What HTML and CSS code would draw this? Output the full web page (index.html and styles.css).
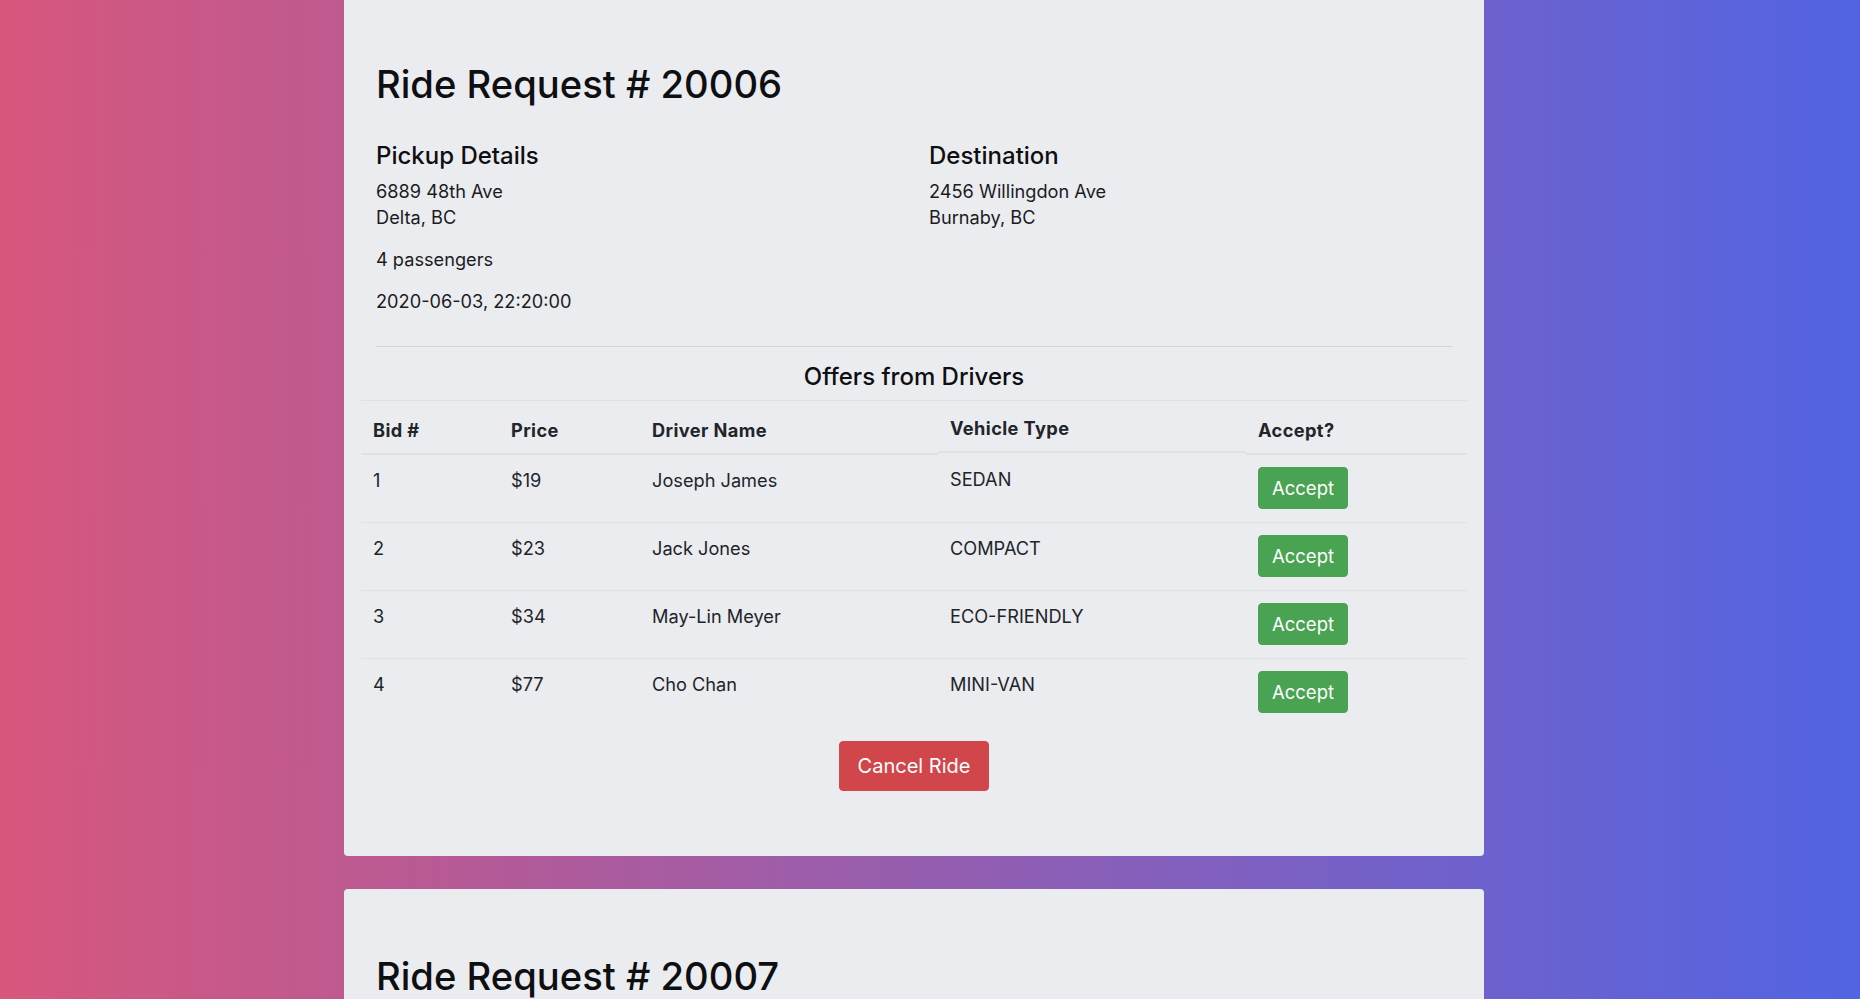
FILE: index.html
```html
<!DOCTYPE html>
<html lang="en">
<head>
<meta charset="utf-8">
<title>Ride Requests</title>
<link rel="stylesheet" href="styles.css">
</head>
<body>
<div class="page">
  <div class="container">
    <section class="card">
      <h1 class="title">Ride Request # 20006</h1>
      <div class="details">
        <div class="col">
          <h4 class="sub">Pickup Details</h4>
          <p class="txt">6889 48th Ave<br>Delta, BC</p>
          <p class="txt">4 passengers</p>
          <p class="txt">2020-06-03, 22:20:00</p>
        </div>
        <div class="col">
          <h4 class="sub">Destination</h4>
          <p class="txt">2456 Willingdon Ave<br>Burnaby, BC</p>
        </div>
      </div>
      <hr class="rule">
      <h4 class="offers">Offers from Drivers</h4>
      <table class="bids">
        <colgroup>
          <col class="c-bid"><col class="c-price"><col class="c-name"><col class="c-veh"><col class="c-acc">
        </colgroup>
        <thead>
          <tr>
            <th>Bid #</th>
            <th>Price</th>
            <th>Driver Name</th>
            <th class="th-veh"><div class="veh-inner">Vehicle Type</div></th>
            <th>Accept?</th>
          </tr>
        </thead>
        <tbody>
          <tr><td>1</td><td>$19</td><td>Joseph James</td><td>SEDAN</td><td><button class="btn btn-accept">Accept</button></td></tr>
          <tr><td>2</td><td>$23</td><td>Jack Jones</td><td>COMPACT</td><td><button class="btn btn-accept">Accept</button></td></tr>
          <tr><td>3</td><td>$34</td><td>May-Lin Meyer</td><td>ECO-FRIENDLY</td><td><button class="btn btn-accept">Accept</button></td></tr>
          <tr><td>4</td><td>$77</td><td>Cho Chan</td><td>MINI-VAN</td><td><button class="btn btn-accept">Accept</button></td></tr>
        </tbody>
      </table>
      <div class="actions">
        <button class="btn btn-cancel">Cancel Ride</button>
      </div>
    </section>
    <section class="card">
      <h1 class="title">Ride Request # 20007</h1>
      <div class="details">
        <div class="col">
          <h4 class="sub">Pickup Details</h4>
        </div>
        <div class="col">
          <h4 class="sub">Destination</h4>
        </div>
      </div>
    </section>
  </div>
</div>
</body>
</html>
```

FILE: styles.css
```css
* { box-sizing: border-box; }

html, body {
  margin: 0;
  padding: 0;
}

body {
  font-family: Inter, "Noto Sans", "Liberation Sans", sans-serif;
  font-size: 18.2px;
  line-height: 26px;
  color: #1b1c1f;
  background: linear-gradient(90deg, #d7577d 0%, #5264e2 100%);
  min-height: 100vh;
}

.page {
  padding-right: 32px;
  margin-top: -3px;
}

.container {
  width: 1140px;
  margin: 0 auto;
}

.card {
  background: #ebecf0;
  border-radius: 4px;
  padding: 63px 32px 65px;
  margin-bottom: 33px;
}

.title {
  margin: 0 0 33px;
  font-size: 38.2px;
  line-height: 48px;
  font-weight: 500;
  color: #0e0f11;
}

.details {
  display: grid;
  grid-template-columns: 1fr 1fr;
  column-gap: 30px;
}

.sub {
  margin: 0 0 8px;
  font-size: 24px;
  line-height: 29px;
  font-weight: 500;
  color: #0e0f11;
}

.txt {
  margin: 0 0 16px;
}

.rule {
  border: 0;
  border-top: 1px solid rgba(0, 0, 0, 0.1);
  margin: 16px 0 15px;
}

.offers {
  margin: 0 0 9px;
  text-align: center;
  font-size: 24px;
  line-height: 29px;
  font-weight: 500;
  color: #0e0f11;
}

.bids {
  width: 1106px;
  margin: 0 -15px 15px;
  border-collapse: collapse;
  table-layout: fixed;
  color: #212529;
}

.c-bid { width: 138px; }
.c-price { width: 141px; }
.c-name { width: 298px; }
.c-veh { width: 308px; }
.c-acc { width: 221px; }

.bids th,
.bids td {
  text-align: left;
  padding: 12px 12px 13px;
  border-top: 1px solid #dfe1e5;
}

.bids th {
  vertical-align: bottom;
  font-weight: 700;
  letter-spacing: 0.4px;
  padding-top: 16px;
  padding-bottom: 10px;
  border-bottom: 2px solid #dfe1e5;
}

.bids td {
  vertical-align: top;
}

.bids tbody tr:first-child td {
  border-top: 0;
}

.bids th.th-veh {
  vertical-align: top;
  padding: 0;
  border-bottom: 0;
}

.veh-inner {
  padding: 14px 12px 10px;
  border-bottom: 2px solid #dfe1e5;
}

.btn {
  font-family: inherit;
  color: #fff;
  border: 1px solid transparent;
  border-radius: 4px;
  cursor: pointer;
  display: inline-block;
  white-space: nowrap;
}

.btn-accept {
  background: #49a352;
  border-color: #49a352;
  font-size: 18.5px;
  line-height: 26px;
  padding: 7px 0;
  width: 90px;
  text-align: center;
}

.actions {
  display: flex;
  justify-content: center;
}

.btn-cancel {
  background: #d1464a;
  border-color: #d1464a;
  font-size: 20px;
  line-height: 30px;
  padding: 9px 18px;
}
```
